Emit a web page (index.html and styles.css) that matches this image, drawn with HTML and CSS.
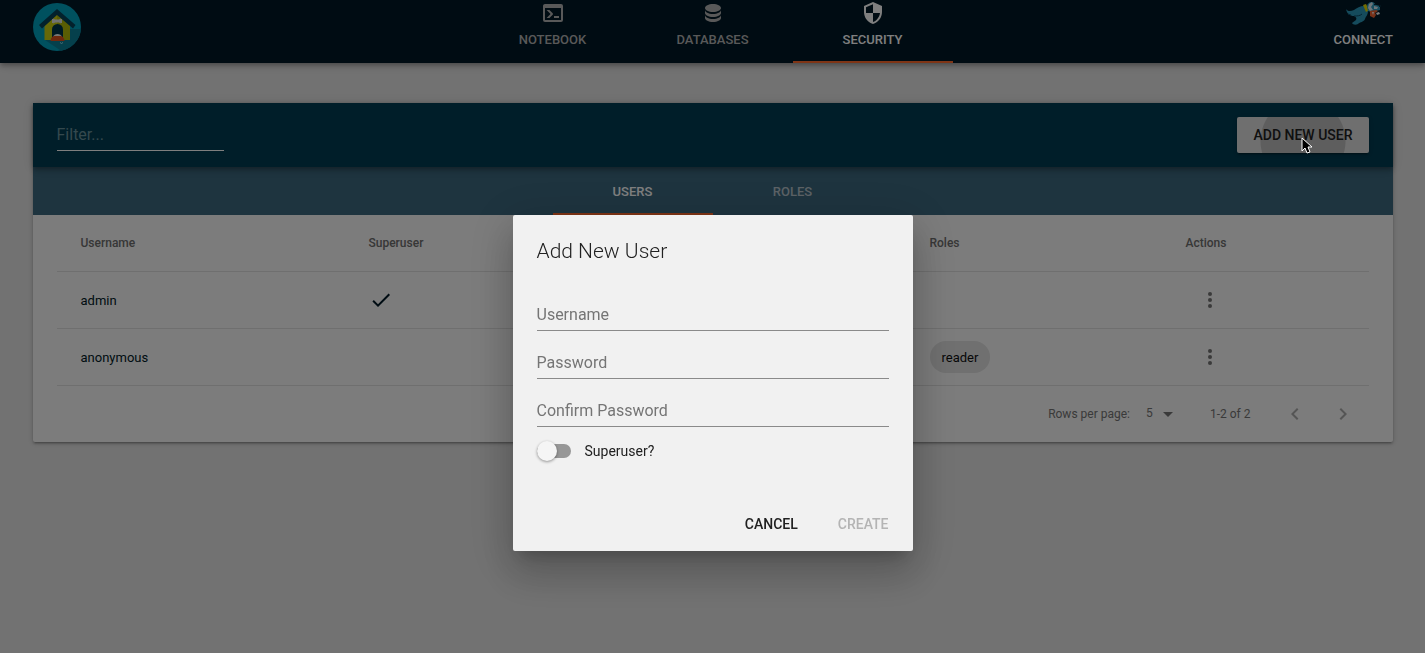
FILE: index.html
```html
<!DOCTYPE html>
<html lang="en">
<head>
    <meta charset="UTF-8">
    <meta name="viewport" content="width=device-width, initial-scale=1.0">
    <title>Security</title>
    <link rel="stylesheet" href="styles.css">
</head>
<body>
    <header class="header">
        <a class="logo" href="#" aria-label="Home">
            <svg width="48" height="48" viewBox="0 0 48 48">
                <circle cx="24" cy="24" r="24" fill="#00a2bf"/>
                <path d="M37 26l11 0A24 24 0 0 1 28 47.700L12 37z" fill="#0a8098"/>
                <path d="M11.500 19L24 9l13 10v18H11.500z" fill="#cdd010"/>
                <path d="M24 9l13 10v18H24z" fill="#b4ba08"/>
                <path d="M6 22L24 6l18.500 16-2.500 3.500L24 12 9 25.500z" fill="#064258"/>
                <path d="M19 37V26.500a5.500 5.500 0 0 1 11 0V37z" fill="#003448"/>
                <path d="M20 16l2 1h4l2-1 1 1-1 1 1 1-1 1-2-1h-4l-2 1-1-1 1-1-1-1z" fill="#e4e4e4" stroke="#e4e4e4"/>
                <path d="M20 34c1-4 8-4 9 0z" fill="#ececec"/>
                <path d="M17.500 38c0-3 2-5 4-5h6c2 0 4 2 4 5z" fill="#e0501c"/>
                <path d="M27 39.500q1.500 2 3 0" fill="none" stroke="#9ee0ee"/>
            </svg>
        </a>
        <nav class="nav">
            <a class="nav-tab" href="#">
                <svg width="24" height="24" viewBox="0 0 24 24"><path d="M20,19V7H4V19H20M20,3A2,2 0 0,1 22,5V19A2,2 0 0,1 20,21H4A2,2 0 0,1 2,19V5C2,3.89 2.9,3 4,3H20M13,17V15H18V17H13M9.58,13L5.57,9H8.4L11.7,12.3C12.09,12.69 12.09,13.33 11.7,13.72L8.42,17H5.59L9.58,13Z"/></svg>
                <span>NOTEBOOK</span>
            </a>
            <a class="nav-tab" href="#">
                <svg width="24" height="24" viewBox="0 0 24 24"><path d="M12,3C7.58,3 4,4.79 4,7C4,9.21 7.58,11 12,11C16.42,11 20,9.21 20,7C20,4.79 16.42,3 12,3M4,9V12C4,14.21 7.58,16 12,16C16.42,16 20,14.21 20,12V9C20,11.21 16.42,13 12,13C7.58,13 4,11.21 4,9M4,14V17C4,19.21 7.58,21 12,21C16.42,21 20,19.21 20,17V14C20,16.21 16.42,18 12,18C7.58,18 4,16.21 4,14Z"/></svg>
                <span>DATABASES</span>
            </a>
            <a class="nav-tab active" href="#">
                <svg width="24" height="24" viewBox="0 0 24 24"><path d="M12 1L3 5v6c0 5.55 3.84 10.74 9 12 5.16-1.26 9-6.45 9-12V5l-9-4zm0 10.99h7c-.53 4.12-3.28 7.79-7 8.94V12H5V6.3l7-3.11v8.8z"/></svg>
                <span>SECURITY</span>
            </a>
        </nav>
        <a class="connect" href="#">
            <svg width="36" height="24" viewBox="0 0 36 24">
                <path d="M1 8c2 3 5 2 8 1 3-2 6-4 10-4l4 5c0 4-2 5-3 8-1 3-5 3-7 5-2 1-5 1-6-1l4-3c1-2 0-3-2-4-4 0-7-2-8-7z" fill="#2a96b8"/>
                <path d="M9 15c3 0 6 0 8-2M3 13l3 1" fill="none" stroke="#0c4a66"/>
                <path d="M18 4l3-1 3 6-3 2z" fill="#e6d800"/>
                <path d="M22 6c0-3 2-5 5-5 2 0 3 2 4 3l4 1v4l-4 1-5 1-3-1z" fill="#2f9fc2"/>
                <path d="M23 7l1-4 3-2 1 2-2 3 2 3-3 1zM29 5l4 1-1 2-3 0z" fill="#dcebf2"/>
                <path d="M25 10l6-1 2 1-3 2 1 2-2 3-4-2z" fill="#ee6230"/>
                <path d="M31 12l3-1 1 2-3 1zM27 11l1 3 1-3z" fill="#f4f4f4"/>
                <path d="M29 3h2v1h-2zM34 4h2v2h-2z" fill="#062838"/>
            </svg>
            <span>CONNECT</span>
        </a>
    </header>

    <main class="card">
        <div class="toolbar">
            <input class="filter" type="text" placeholder="Filter..." aria-label="Filter">
            <div class="add-user">
                <button class="add-button" type="button"><span>ADD NEW USER</span></button>
                <svg class="cursor" width="12" height="18" viewBox="0 0 12 18"><path d="M1 1v13l3-3 2 5 3-1-2-5h4z" fill="#000" stroke="#fff"/></svg>
            </div>
        </div>
        <div class="tabs" role="tablist">
            <button class="tab active" type="button" role="tab" aria-selected="true">USERS</button>
            <button class="tab" type="button" role="tab" aria-selected="false">ROLES</button>
        </div>
        <div class="table-wrap">
            <table class="users">
                <colgroup>
                    <col class="col-name">
                    <col>
                    <col class="col-roles">
                    <col class="col-actions">
                </colgroup>
                <thead>
                    <tr><th>Username</th><th>Superuser</th><th>Roles</th><th>Actions</th></tr>
                </thead>
                <tbody>
                    <tr>
                        <td>admin</td>
                        <td><svg width="24" height="24" viewBox="0 0 24 24"><path d="M9 16.170L4.830 12l-1.420 1.410L9 19 21 7l-1.410-1.410z"/></svg></td>
                        <td></td>
                        <td><button class="icon-button" type="button" aria-label="Actions for admin"><svg width="24" height="24" viewBox="0 0 24 24"><circle cx="12" cy="6" r="2"/><circle cx="12" cy="12" r="2"/><circle cx="12" cy="18" r="2"/></svg></button></td>
                    </tr>
                    <tr>
                        <td>anonymous</td>
                        <td></td>
                        <td><span class="chip">reader</span></td>
                        <td><button class="icon-button" type="button" aria-label="Actions for anonymous"><svg width="24" height="24" viewBox="0 0 24 24"><circle cx="12" cy="6" r="2"/><circle cx="12" cy="12" r="2"/><circle cx="12" cy="18" r="2"/></svg></button></td>
                    </tr>
                </tbody>
            </table>
        </div>
        <div class="pagination">
            <label for="rows">Rows per page:</label>
            <div class="select">
                <select id="rows">
                    <option>5</option>
                    <option>10</option>
                    <option>25</option>
                </select>
                <svg width="24" height="24" viewBox="0 0 24 24"><path d="M7 10l5 5 5-5z"/></svg>
            </div>
            <span class="range">1-2 of 2</span>
            <button class="page-button" type="button" aria-label="Previous page" disabled><svg width="24" height="24" viewBox="0 0 24 24"><path d="M15.410 7.410L14 6l-6 6 6 6 1.410-1.410L10.830 12z"/></svg></button>
            <button class="page-button" type="button" aria-label="Next page" disabled><svg width="24" height="24" viewBox="0 0 24 24"><path d="M10 6L8.590 7.410 13.170 12l-4.580 4.590L10 18l6-6z"/></svg></button>
        </div>
    </main>

    <div class="backdrop">
        <form class="dialog" role="dialog" aria-modal="true" aria-labelledby="dialog-title">
            <h2 id="dialog-title">Add New User</h2>
            <div class="fields">
                <input type="text" placeholder="Username" aria-label="Username">
                <input type="password" placeholder="Password" aria-label="Password">
                <input type="password" placeholder="Confirm Password" aria-label="Confirm Password">
            </div>
            <div class="switch-row">
                <input class="switch" type="checkbox" id="superuser">
                <label for="superuser">Superuser?</label>
            </div>
            <div class="dialog-actions">
                <button type="button">CANCEL</button>
                <button type="submit" disabled>CREATE</button>
            </div>
        </form>
    </div>
</body>
</html>
```

FILE: styles.css
```css
* {
    box-sizing: border-box;
}
body {
    margin: 0;
    min-height: 100vh;
    background: #e4e4e4;
    color: #001926;
    font-family: Roboto, "Liberation Sans", sans-serif;
    font-size: 14px;
}
svg {
    display: block;
    fill: currentColor;
}
button {
    padding: 0;
    border: none;
    background: none;
    color: inherit;
    font: inherit;
    font-weight: 500;
}
input, select {
    border: none;
    border-radius: 0;
    outline: none;
    background: none;
    font: inherit;
}

/* Header */
.header {
    display: grid;
    grid-template-columns: 1fr auto 1fr;
    height: 63px;
    padding: 0 32px;
    background: #001926;
    box-shadow: 0 2px 4px -1px rgba(0,0,0,0.2), 0 4px 5px 0 rgba(0,0,0,0.14), 0 1px 10px 0 rgba(0,0,0,0.12);
}
.header a {
    color: #fff;
    font-size: 13px;
    font-weight: 500;
    line-height: 16px;
    text-decoration: none;
}
.logo {
    justify-self: start;
    padding: 3px 1px;
}
.nav {
    display: flex;
}
.nav-tab, .connect {
    display: flex;
    flex-direction: column;
    align-items: center;
    gap: 7px;
    padding-top: 1px;
}
.nav-tab {
    width: 160px;
    border-bottom: 2px solid transparent;
}
.header .nav-tab {
    color: #b2b2b2;
}
.header .nav-tab.active {
    border-color: #ff6a2c;
    color: #fff;
}
.connect {
    justify-self: end;
}

/* Users card */
.card {
    width: calc(100% - 64px);
    max-width: 1360px;
    margin: 40px auto;
    border-radius: 2px;
    background: #f8f8f8;
    box-shadow: 0 1px 5px 0 rgba(0,0,0,0.2), 0 2px 2px 0 rgba(0,0,0,0.14), 0 3px 1px -2px rgba(0,0,0,0.12);
}
.toolbar {
    position: relative;
    display: flex;
    align-items: center;
    justify-content: space-between;
    height: 64px;
    padding: 0 24px;
    background: #003c52;
    box-shadow: 0 2px 4px -1px rgba(0,0,0,0.2), 0 4px 5px 0 rgba(0,0,0,0.14), 0 1px 10px 0 rgba(0,0,0,0.12);
}
.filter {
    width: 167px;
    height: 32px;
    padding: 0;
    border-bottom: 1px solid #fff;
    color: #fff;
    font-size: 16px;
}
.filter::placeholder {
    color: #6a929c;
}
.add-user {
    position: relative;
}
.add-button {
    height: 36px;
    padding: 0 16px;
    border-radius: 2px;
    background: radial-gradient(circle at 66px 24px, #bcbcbc 42px, #dedede 43px);
    color: #212121;
    box-shadow: 0 3px 1px -2px rgba(0,0,0,0.2), 0 2px 2px 0 rgba(0,0,0,0.14), 0 1px 5px 0 rgba(0,0,0,0.12);
}
.cursor {
    position: absolute;
    top: 20px;
    left: 64px;
    z-index: 2;
}
.tabs {
    display: flex;
    justify-content: center;
    height: 48px;
    background: #3c687e;
}
.tab {
    width: 160px;
    border-top: 2px solid transparent;
    border-bottom: 2px solid transparent;
    color: #b8c4cc;
    font-size: 13px;
}
.tab.active {
    border-bottom-color: #ff6a2c;
    color: #fff;
}
.table-wrap {
    padding: 0 24px;
}
.users {
    width: 100%;
    border-spacing: 0;
    table-layout: fixed;
    font-size: 13px;
}
.col-name {
    width: 288px;
}
.col-roles {
    width: 256px;
}
.col-actions {
    width: 207px;
}
.users th, .users td {
    height: 57px;
    padding: 0 24px;
    border-bottom: 1px solid #dedede;
    text-align: left;
}
.users th {
    color: #6e6e6e;
    font-size: 12px;
    font-weight: 500;
}
.chip {
    display: inline-flex;
    align-items: center;
    height: 32px;
    padding: 0 12px;
    border-radius: 16px;
    background: #e0e0e0;
    color: #101010;
    vertical-align: middle;
}
.icon-button {
    width: 48px;
    height: 48px;
    padding: 12px;
    color: #757575;
    vertical-align: middle;
}
.pagination {
    display: flex;
    align-items: center;
    justify-content: flex-end;
    height: 56px;
    padding-right: 26px;
    color: #757575;
    font-size: 12px;
}
.select {
    position: relative;
    margin: 0 30px 0 16px;
}
.select select {
    width: 34px;
    height: 24px;
    padding: 0 0 2px;
    appearance: none;
    color: inherit;
}
.select svg {
    position: absolute;
    top: 0;
    right: 0;
    pointer-events: none;
}
.range {
    margin-right: 20px;
}
.page-button {
    width: 48px;
    height: 48px;
    padding: 12px;
    color: #aaa;
}

/* Add user dialog */
.backdrop {
    position: fixed;
    inset: 0;
    z-index: 1;
    display: flex;
    align-items: flex-start;
    justify-content: center;
    padding-top: 215px;
    background: rgba(0,0,0,0.5);
}
.dialog {
    width: 400px;
    padding: 24px 24px 16px;
    border-radius: 2px;
    background: #f1f1f1;
    color: #212121;
    box-shadow: 0 11px 15px -7px rgba(0,0,0,0.2), 0 24px 38px 3px rgba(0,0,0,0.14), 0 9px 46px 8px rgba(0,0,0,0.12);
}
.dialog h2 {
    margin: 0 0 32px;
    font-size: 21px;
    font-weight: 300;
    line-height: 24px;
}
.fields {
    display: flex;
    flex-direction: column;
    gap: 12px;
}
.fields input {
    height: 36px;
    padding: 4px 0 0;
    border-bottom: 1px solid #8a8a8a;
    font-size: 16px;
}
.fields input::placeholder {
    color: #757575;
    opacity: 1;
}
.switch-row {
    display: flex;
    align-items: center;
    gap: 14px;
    height: 48px;
}
.switch {
    display: flex;
    align-items: center;
    width: 34px;
    height: 14px;
    margin: 0;
    border-radius: 7px;
    appearance: none;
    background: #979797;
}
.switch::before {
    content: "";
    flex: none;
    width: 20px;
    height: 20px;
    border-radius: 50%;
    background: #f5f5f5;
    box-shadow: 0 1px 3px rgba(0,0,0,0.4);
}
.switch:checked::before {
    margin-left: 14px;
}
.dialog-actions {
    display: flex;
    justify-content: flex-end;
    gap: 40px;
    margin-top: 38px;
    line-height: 22px;
}
.dialog-actions button:disabled {
    color: #b4b4b4;
}
```
